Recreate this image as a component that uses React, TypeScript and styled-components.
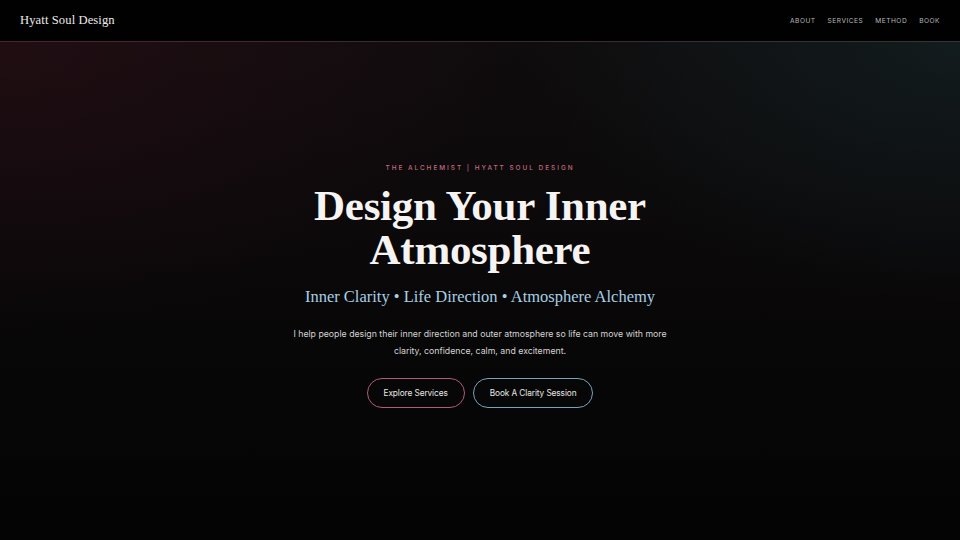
import styled, { createGlobalStyle } from "styled-components";

const Global = createGlobalStyle`
  html, body {
    margin: 0;
    padding: 0;
    background: #050405;
  }
  * { box-sizing: border-box; }
`;

const Page = styled.div`
  width: 100%;
  height: 540px;
  display: flex;
  flex-direction: column;
  overflow: hidden;
  background: #050405;
`;

const Header = styled.header`
  height: 42px;
  flex-shrink: 0;
  display: flex;
  align-items: center;
  justify-content: space-between;
  padding: 0 20px;
  background: #010101;
  border-bottom: 1px solid transparent;
  border-image: linear-gradient(90deg, #4a2330, #3a2a30 50%, #333638) 1;
`;

const Logo = styled.div`
  font-family: "Liberation Serif", "DejaVu Serif", serif;
  font-size: 12.6px;
  color: #ecebea;
  letter-spacing: 0.1px;
`;

const Nav = styled.nav`
  display: flex;
  gap: 12px;
`;

const NavLink = styled.a`
  font-family: Inter, "Liberation Sans", sans-serif;
  font-size: 6.6px;
  letter-spacing: 0.5px;
  color: #b9b9bc;
  text-transform: uppercase;
  text-decoration: none;
`;

const Hero = styled.section`
  flex: 1;
  display: flex;
  flex-direction: column;
  align-items: center;
  padding-top: 122px;
  background:
    radial-gradient(ellipse 75% 80% at 0% 0%, rgba(60, 16, 28, 0.38), transparent 72%),
    radial-gradient(ellipse 65% 75% at 100% 0%, rgba(22, 46, 50, 0.45), transparent 70%),
    linear-gradient(180deg, #0f0c0d 0%, #070607 70%, #050405 100%);
`;

const Eyebrow = styled.p`
  margin: 0;
  font-family: Inter, "Liberation Sans", sans-serif;
  font-size: 6.4px;
  font-weight: 500;
  letter-spacing: 2px;
  color: #c66a80;
  text-transform: uppercase;
`;

const Title = styled.h1`
  margin: 12px 0 0;
  font-family: "Liberation Serif", "DejaVu Serif", serif;
  font-weight: 700;
  font-size: 43px;
  line-height: 44px;
  color: #f6f4f2;
  text-align: center;
  letter-spacing: -0.3px;
`;

const Tagline = styled.p`
  margin: 15px 0 0;
  font-family: "Liberation Serif", "DejaVu Serif", serif;
  font-size: 16.5px;
  color: #a8cfe4;
  text-align: center;
`;

const Lead = styled.p`
  margin: 19px 0 0;
  max-width: 390px;
  font-family: Inter, "Liberation Sans", sans-serif;
  font-size: 8.75px;
  line-height: 17px;
  font-weight: 400;
  color: #d4d3d3;
  text-align: center;
`;

const Actions = styled.div`
  margin-top: 18px;
  display: flex;
  gap: 8px;
`;

const Button = styled.a<{ $tone: "rose" | "sky" }>`
  height: 30px;
  padding: 0 16px;
  display: flex;
  align-items: center;
  border-radius: 999px;
  border: 1px solid ${(p) => (p.$tone === "rose" ? "#b35b70" : "#7aa3b8")};
  background: rgba(8, 8, 10, 0.6);
  font-family: Inter, "Liberation Sans", sans-serif;
  font-size: 8.3px;
  color: #e9e7e6;
  text-decoration: none;
  letter-spacing: -0.1px;
`;

export default function App() {
  return (
    <>
      <Global />
      <Page>
        <Header>
          <Logo>Hyatt Soul Design</Logo>
          <Nav>
            <NavLink href="#about">About</NavLink>
            <NavLink href="#services">Services</NavLink>
            <NavLink href="#method">Method</NavLink>
            <NavLink href="#book">Book</NavLink>
          </Nav>
        </Header>
        <Hero>
          <Eyebrow>The Alchemist | Hyatt Soul Design</Eyebrow>
          <Title>
            Design Your Inner
            <br />
            Atmosphere
          </Title>
          <Tagline>Inner Clarity • Life Direction • Atmosphere Alchemy</Tagline>
          <Lead>
            I help people design their inner direction and outer atmosphere so life can move with
            more clarity, confidence, calm, and excitement.
          </Lead>
          <Actions>
            <Button $tone="rose" href="#services">Explore Services</Button>
            <Button $tone="sky" href="#book">Book A Clarity Session</Button>
          </Actions>
        </Hero>
      </Page>
    </>
  );
}
